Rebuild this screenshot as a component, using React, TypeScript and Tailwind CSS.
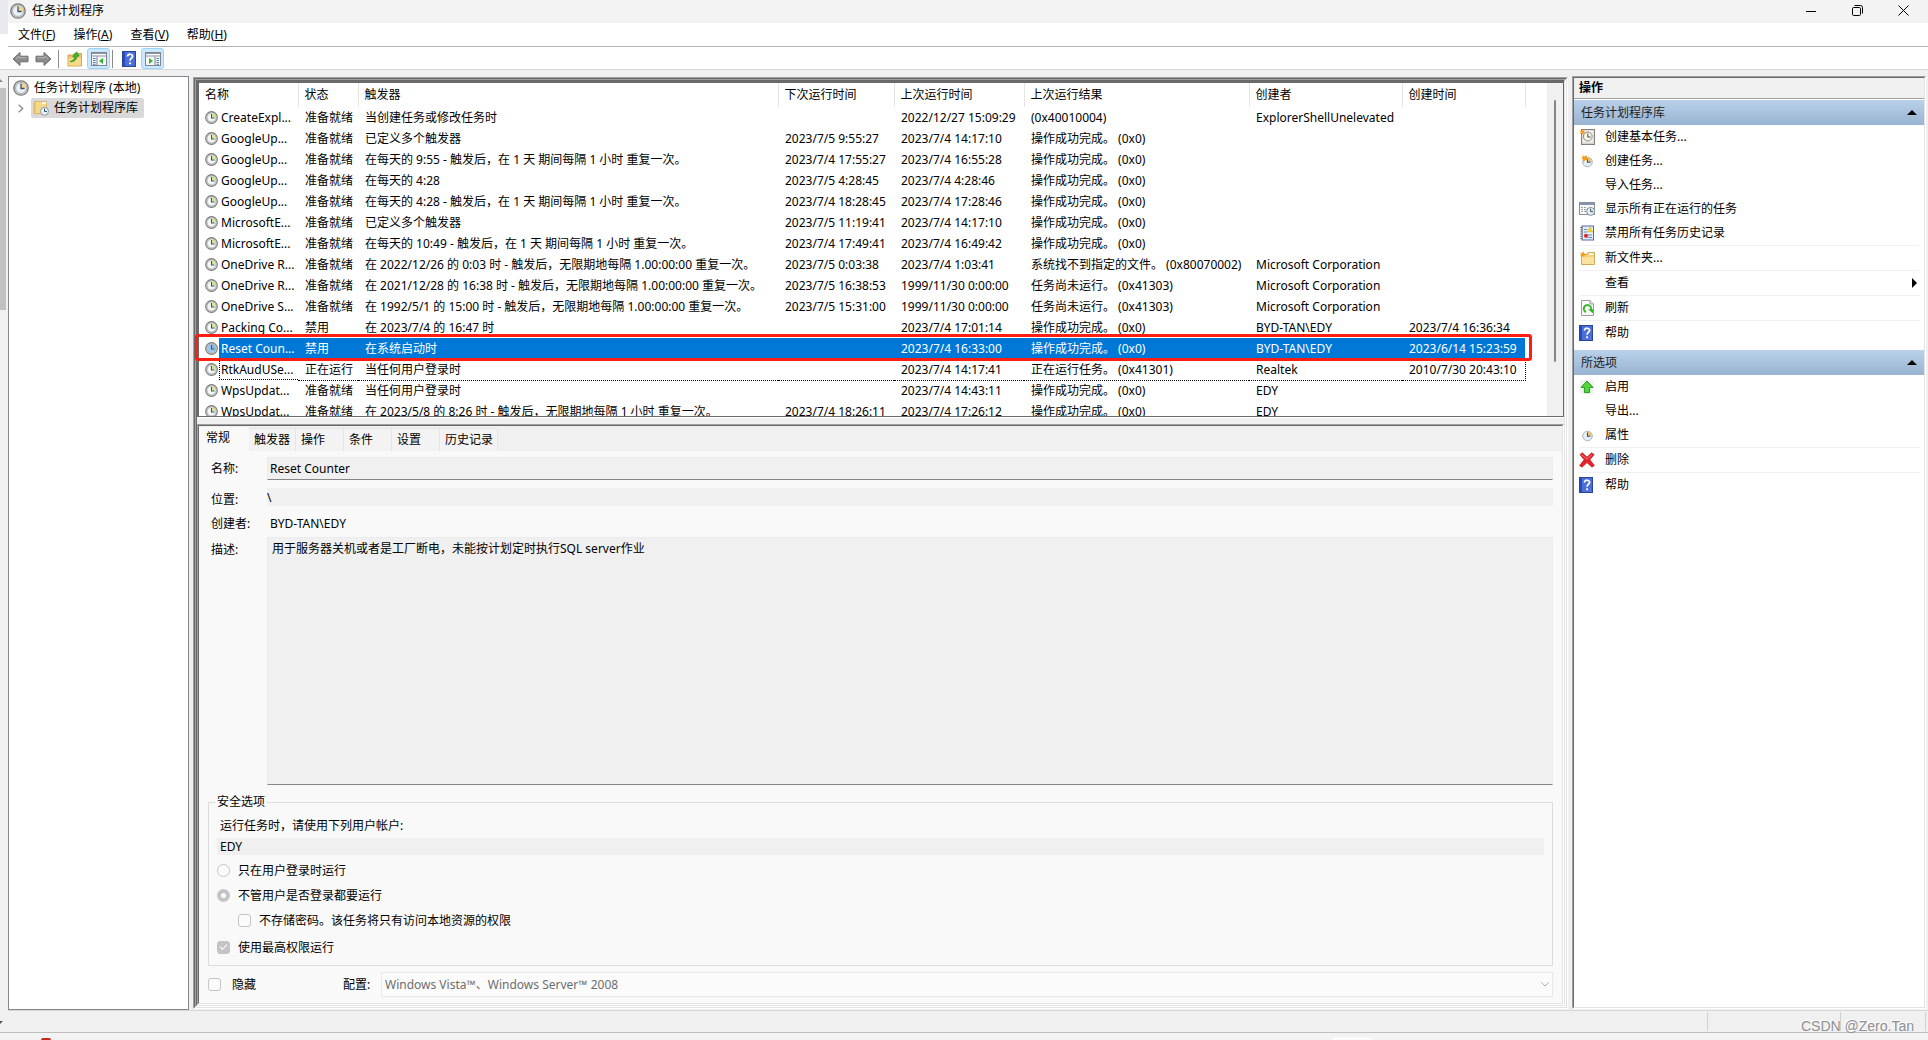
import { ReactNode } from 'react'
import { clsx } from 'clsx'

const menus = [
  { label: '文件', key: 'F' },
  { label: '操作', key: 'A' },
  { label: '查看', key: 'V' },
  { label: '帮助', key: 'H' },
]

const columns = [
  { label: '名称', width: 'w-[99px]' },
  { label: '状态', width: 'w-[60px]' },
  { label: '触发器', width: 'w-[420px]' },
  { label: '下次运行时间', width: 'w-[116px]' },
  { label: '上次运行时间', width: 'w-[130px]' },
  { label: '上次运行结果', width: 'w-[225px]' },
  { label: '创建者', width: 'w-[153px]' },
  { label: '创建时间', width: 'w-[123px]' },
]

const done = '操作成功完成。 (0x0)'

const tasks = [
  ['CreateExpl...', '准备就绪', '当创建任务或修改任务时', '', '2022/12/27 15:09:29', '(0x40010004)', 'ExplorerShellUnelevated', ''],
  ['GoogleUp...', '准备就绪', '已定义多个触发器', '2023/7/5 9:55:27', '2023/7/4 14:17:10', done, '', ''],
  ['GoogleUp...', '准备就绪', '在每天的 9:55 - 触发后，在 1 天 期间每隔 1 小时 重复一次。', '2023/7/4 17:55:27', '2023/7/4 16:55:28', done, '', ''],
  ['GoogleUp...', '准备就绪', '在每天的 4:28', '2023/7/5 4:28:45', '2023/7/4 4:28:46', done, '', ''],
  ['GoogleUp...', '准备就绪', '在每天的 4:28 - 触发后，在 1 天 期间每隔 1 小时 重复一次。', '2023/7/4 18:28:45', '2023/7/4 17:28:46', done, '', ''],
  ['MicrosoftE...', '准备就绪', '已定义多个触发器', '2023/7/5 11:19:41', '2023/7/4 14:17:10', done, '', ''],
  ['MicrosoftE...', '准备就绪', '在每天的 10:49 - 触发后，在 1 天 期间每隔 1 小时 重复一次。', '2023/7/4 17:49:41', '2023/7/4 16:49:42', done, '', ''],
  ['OneDrive R...', '准备就绪', '在 2022/12/26 的 0:03 时 - 触发后，无限期地每隔 1.00:00:00 重复一次。', '2023/7/5 0:03:38', '2023/7/4 1:03:41', '系统找不到指定的文件。 (0x80070002)', 'Microsoft Corporation', ''],
  ['OneDrive R...', '准备就绪', '在 2021/12/28 的 16:38 时 - 触发后，无限期地每隔 1.00:00:00 重复一次。', '2023/7/5 16:38:53', '1999/11/30 0:00:00', '任务尚未运行。 (0x41303)', 'Microsoft Corporation', ''],
  ['OneDrive S...', '准备就绪', '在 1992/5/1 的 15:00 时 - 触发后，无限期地每隔 1.00:00:00 重复一次。', '2023/7/5 15:31:00', '1999/11/30 0:00:00', '任务尚未运行。 (0x41303)', 'Microsoft Corporation', ''],
  ['Packing Co...', '禁用', '在 2023/7/4 的 16:47 时', '', '2023/7/4 17:01:14', done, 'BYD-TAN\\EDY', '2023/7/4 16:36:34'],
  ['Reset Coun...', '禁用', '在系统启动时', '', '2023/7/4 16:33:00', done, 'BYD-TAN\\EDY', '2023/6/14 15:23:59'],
  ['RtkAudUSe...', '正在运行', '当任何用户登录时', '', '2023/7/4 14:17:41', '正在运行任务。 (0x41301)', 'Realtek', '2010/7/30 20:43:10'],
  ['WpsUpdat...', '准备就绪', '当任何用户登录时', '', '2023/7/4 14:43:11', done, 'EDY', ''],
  ['WpsUpdat...', '准备就绪', '在 2023/5/8 的 8:26 时 - 触发后，无限期地每隔 1 小时 重复一次。', '2023/7/4 18:26:11', '2023/7/4 17:26:12', done, 'EDY', ''],
]

const selectedIndex = 11
const focusedIndex = 12

const tabs = [
  { label: '触发器', width: 'w-[47px]' },
  { label: '操作', width: 'w-12' },
  { label: '条件', width: 'w-12' },
  { label: '设置', width: 'w-12' },
  { label: '历史记录', width: 'w-[58px]' },
]

const ClockIcon = ({
  size = 16,
  face = '#e9f2fb',
  wedge = '#f6d48c',
}: {
  size?: number
  face?: string
  wedge?: string
}) => (
  <svg width={size} height={size} viewBox="0 0 16 16" className="shrink-0">
    <circle cx="8" cy="8" r="7.2" fill="#cfcfcf" stroke="#7b7b7b" strokeWidth="1.3" />
    <circle cx="8" cy="8" r="5.4" fill={face} stroke="#a8a8a8" strokeWidth="0.8" />
    <path d="M8 8V2.8A5.2 5.2 0 0 1 13.2 8Z" fill={wedge} />
    <path d="M8 3.6V8.5H11.6" fill="none" stroke="#3f5266" strokeWidth="1.3" />
  </svg>
)

const SmallClock = ({ star }: { star?: boolean }) => (
  <svg width="16" height="16" viewBox="0 0 16 16">
    <circle cx="8.5" cy="9" r="4.8" fill="#e3eef6" stroke="#a3b5c2" />
    <path d="M8.5 9V4.6A4.4 4.4 0 0 1 12.9 9Z" fill="#f5c56d" />
    <path d="M8.5 5.5V9.3H11.5" fill="none" stroke="#34506b" strokeWidth="1.1" />
    {star && (
      <path d="M3 2l2 1.6L8 2.4 7.6 5 9 7 6.2 7 4.6 9.2 4 6.6 2.6 5.4 3.6 4Z" fill="#f59b14" />
    )}
  </svg>
)

const ArrowIcon = ({ flip }: { flip?: boolean }) => (
  <svg width="17" height="16" viewBox="0 0 17 16" className={clsx(flip && '-scale-x-100')}>
    <path d="M1 8L8 1.5V5.2H16V10.8H8V14.5Z" fill="#8b8b8b" stroke="#6e6e6e" strokeLinejoin="round" />
    <path d="M4 8L7 5.2V6.8H14.5" fill="none" stroke="#b9b9b9" />
  </svg>
)

const FolderUpIcon = () => (
  <svg width="16" height="16" viewBox="0 0 16 16">
    <path d="M1 4H6L7.5 2.5H14.5V15H1Z" fill="#e9c46a" stroke="#c79b3a" strokeWidth="0.8" />
    <path d="M1.5 7H14V14.6H1.5Z" fill="#f6da8a" />
    <path d="M3 10.5C6 10 7.5 8 7.8 5.5L5.6 5.8 9.5 0.8 12.2 5 10.2 5C9.8 8.5 7 11.5 3 10.5Z" fill="#3cba2e" stroke="#1f8a1a" strokeWidth="0.6" />
  </svg>
)

const PaneIcon = ({ right }: { right?: boolean }) => (
  <svg width="16" height="14" viewBox="0 0 16 14">
    <rect x="0.5" y="0.5" width="15" height="13" fill="#f7f7f7" stroke="#7d8590" />
    <path d="M1 1.5H15M1 4H15" stroke="#8d97a5" strokeWidth="1.2" />
    {right ? (
      <>
        <path d="M10 4.5V13.5" stroke="#7d8590" />
        <path d="M4 6V12L8 9Z" fill="#35b52a" />
        <path d="M11.5 6.5H14M11.5 8.5H14M11.5 10.5H14M11.5 12.3H14" stroke="#4b7fc4" />
      </>
    ) : (
      <>
        <path d="M6 4.5V13.5" stroke="#7d8590" />
        <path d="M12 6V12L8 9Z" fill="#35b52a" />
        <path d="M2 6.5H4.6M2 8.5H4.6M2 10.5H4.6M2 12.3H4.6" stroke="#4b7fc4" />
      </>
    )}
  </svg>
)

const HelpIcon = () => (
  <svg width="14" height="16" viewBox="0 0 14 16" className="shrink-0">
    <rect x="0.5" y="0.5" width="13" height="15" fill="#4a6fd8" stroke="#2c459c" />
    <rect x="1" y="1" width="2" height="14" fill="#2b4cb8" />
    <path d="M5.5 5.4C5.5 2.4 10.8 2.6 10.6 5.4 10.5 7.2 8.1 7.4 8.1 9.8" fill="none" stroke="#fff" strokeWidth="1.7" />
    <circle cx="8.1" cy="12.3" r="1.1" fill="#fff" />
  </svg>
)

const LibraryIcon = () => (
  <svg width="16" height="16" viewBox="0 0 16 16" className="shrink-0">
    <path d="M0.5 2H5L6 3.2V14H0.5Z" fill="#e8c063" />
    <path d="M2 1.5H13.5V12.5L2 14Z" fill="#f5d888" stroke="#d6ab4d" strokeWidth="0.7" />
    <rect x="9" y="2.2" width="4" height="1.6" fill="#fff" />
    <circle cx="11.5" cy="11.3" r="4" fill="#e8f0f6" stroke="#8a9aa6" />
    <path d="M11.5 8.6V11.5H14" fill="none" stroke="#34506b" />
  </svg>
)

const BasicTaskIcon = () => (
  <svg width="16" height="16" viewBox="0 0 16 16">
    <rect x="2.5" y="0.5" width="13" height="15" fill="#d6d2cf" stroke="#8b7d78" />
    <rect x="3.5" y="1.5" width="11" height="12" fill="#f1efee" />
    <circle cx="8.8" cy="7.5" r="4.4" fill="#fbf4e0" stroke="#7f8c96" />
    <path d="M8.8 4.6V8H11.6" fill="none" stroke="#34506b" />
    <path d="M0.5 1.6L3 2.2 4 0 5 2.4 7 3 5 4 4.4 6.4 3 4.6 0.8 5 1.8 3.2Z" fill="#f7a11b" />
  </svg>
)

const RunningIcon = () => (
  <svg width="16" height="14" viewBox="0 0 16 14">
    <rect x="0.5" y="0.5" width="15" height="12" fill="#fafafa" stroke="#8a8f96" />
    <path d="M1 2H15" stroke="#8595ad" strokeWidth="2" />
    <path d="M2 5.5H8M2 7.5H7M2 9.5H7" stroke="#9a9fa6" strokeDasharray="2 1" />
    <circle cx="11.6" cy="9.4" r="4" fill="#e6eef2" stroke="#7e8e99" />
    <path d="M11.6 6.8V9.6H14" fill="none" stroke="#34506b" />
  </svg>
)

const HistoryIcon = () => (
  <svg width="16" height="16" viewBox="0 0 16 16">
    <rect x="3" y="1" width="11.5" height="14" fill="#e4edf8" stroke="#5268a8" />
    <path d="M1.2 2.5H4M1.2 4.7H4M1.2 6.9H4M1.2 9.1H4M1.2 11.3H4M1.2 13.5H4" stroke="#777" />
    <path d="M5 4.5H8M5 7H8M9 10H13M9 12.5H13" stroke="#6f87b8" />
    <path d="M11 2L13.6 6.8H8.4Z" fill="#f5d71c" stroke="#cfae12" strokeWidth="0.5" />
    <circle cx="7" cy="10.8" r="2.1" fill="#d92b2b" />
  </svg>
)

const NewFolderIcon = () => (
  <svg width="16" height="16" viewBox="0 0 16 16">
    <path d="M2.5 4.5H8L9 2.5H15.5V14.5H2.5Z" fill="#f4d27c" stroke="#c99c40" strokeWidth="0.8" />
    <path d="M3 7H15V14H3Z" fill="#fae3a0" />
    <rect x="10" y="3.3" width="4" height="1.5" fill="#fff" />
    <path d="M0.8 2.6L3.2 3.2 4.6 1.2 5.2 3.4 7.6 4 5.6 5.2 5.2 7.4 3.6 5.8 1 6.4 2.2 4.4Z" fill="#f79a12" />
  </svg>
)

const RefreshIcon = () => (
  <svg width="16" height="16" viewBox="0 0 16 16">
    <path d="M2.5 0.5H11L14.5 4V15.5H2.5Z" fill="#fbfbfb" stroke="#9b9b9b" />
    <path d="M11 0.5V4H14.5" fill="#e6e6e6" stroke="#9b9b9b" />
    <path d="M7 12.2A3.7 3.7 0 1 1 12 10" fill="none" stroke="#35b52a" strokeWidth="2" />
    <path d="M9 9.2H14V13.6Z" fill="#35b52a" />
  </svg>
)

const EnableIcon = () => (
  <svg width="16" height="16" viewBox="0 0 16 16">
    <rect x="1" y="1" width="14" height="14" fill="#f2f2f2" />
    <path d="M8 2L14 8.4H10.6V13.6H5.4V8.4H2Z" fill="#52d53b" stroke="#249b1a" strokeLinejoin="round" />
  </svg>
)

const DeleteIcon = () => (
  <svg width="16" height="16" viewBox="0 0 16 16">
    <path d="M1 2.6L3.4 0.8 8 5.2 12.6 0.8 15.2 2.6 10.8 7.8 15.4 13.4 13 15.2 8 10.6 3 15.2 0.6 13.4 5.2 7.8Z" fill="#e8222a" stroke="#b01218" strokeWidth="0.7" />
    <path d="M2.4 2.6L8 7 13.4 2.4" fill="none" stroke="#ff8a86" strokeWidth="0.8" />
  </svg>
)

type Action = { label: string; icon?: ReactNode; line?: boolean; more?: boolean }

const libraryActions: Action[] = [
  { label: '创建基本任务...', icon: <BasicTaskIcon /> },
  { label: '创建任务...', icon: <SmallClock star /> },
  { label: '导入任务...' },
  { label: '显示所有正在运行的任务', icon: <RunningIcon /> },
  { label: '禁用所有任务历史记录', icon: <HistoryIcon />, line: true },
  { label: '新文件夹...', icon: <NewFolderIcon />, line: true },
  { label: '查看', more: true, line: true },
  { label: '刷新', icon: <RefreshIcon />, line: true },
  { label: '帮助', icon: <HelpIcon /> },
]

const selectedActions: Action[] = [
  { label: '启用', icon: <EnableIcon /> },
  { label: '导出...' },
  { label: '属性', icon: <SmallClock />, line: true },
  { label: '删除', icon: <DeleteIcon />, line: true },
  { label: '帮助', icon: <HelpIcon /> },
]

const ActionGroup = ({ title, actions }: { title: string; actions: Action[] }) => (
  <section className="mb-[5px]">
    <button className="flex h-[25px] w-full items-center justify-between bg-linear-to-b from-[#b9d1ea] to-[#99b4d1] pr-[7px] pl-[7px] text-[#1e1e1e]">
      {title}
      <svg width="10" height="5" viewBox="0 0 10 5">
        <path d="M0 5L5 0L10 5Z" />
      </svg>
    </button>
    <ul className="pr-[5px] pl-[5px]">
      {actions.map((action) => (
        <li key={action.label} className={clsx(action.line && 'border-b border-[#f0f0f0]')}>
          <button className="flex h-6 w-full items-center text-left">
            <span className="flex w-[26px] shrink-0">{action.icon}</span>
            <span className="flex-1">{action.label}</span>
            {action.more && (
              <svg width="5" height="10" viewBox="0 0 5 10" className="mr-0.5">
                <path d="M0 0L5 5L0 10Z" />
              </svg>
            )}
          </button>
        </li>
      ))}
    </ul>
  </section>
)

// Classic sunken 3D edge, two pixels wide
const Sunken = ({ className, children }: { className?: string; children: ReactNode }) => (
  <div className="flex min-h-0 min-w-0 flex-1 flex-col border border-t-[#a0a0a0] border-r-white border-b-white border-l-[#a0a0a0]">
    <div
      className={clsx(
        'flex min-h-0 min-w-0 flex-1 flex-col border border-t-[#696969] border-r-[#e3e3e3] border-b-[#e3e3e3] border-l-[#696969]',
        className
      )}
    >
      {children}
    </div>
  </div>
)

const TaskTable = () => (
  <table className="w-[1326px] table-fixed border-collapse whitespace-nowrap">
    <thead>
      <tr className="h-6">
        {columns.map((column) => (
          <th
            key={column.label}
            className={clsx('border-r border-[#e5e5e5] p-0 pl-1.5 text-left font-normal', column.width)}
          >
            {column.label}
          </th>
        ))}
      </tr>
    </thead>
    <tbody>
      {tasks.map((task, row) => {
        const selected = row === selectedIndex
        const focused = row === focusedIndex
        return (
          <tr key={row} className="h-[21px]">
            {task.map((text, col) =>
              col === 0 ? (
                <td key={col} className="p-0">
                  <div className="flex h-[21px] items-center pl-1.5">
                    <ClockIcon
                      size={13}
                      face={selected ? '#9cc7ee' : '#f2f6f4'}
                      wedge={selected ? '#8fb9dc' : '#d5e59a'}
                    />
                    <span
                      className={clsx(
                        'ml-px flex h-full flex-1 items-center pl-0.5',
                        selected && 'bg-[#0078d7] text-white',
                        focused && 'border-b border-l border-dotted border-black pt-px pl-px'
                      )}
                    >
                      {text}
                    </span>
                  </div>
                </td>
              ) : (
                <td
                  key={col}
                  className={clsx(
                    'p-0 pl-[7px]',
                    selected && 'bg-[#0078d7] text-white',
                    focused && 'border-b border-dotted border-black pt-px',
                    focused && col === task.length - 1 && 'border-r'
                  )}
                >
                  {text}
                </td>
              )
            )}
          </tr>
        )
      })}
    </tbody>
  </table>
)

const checkClass =
  "flex size-[13px] shrink-0 appearance-none items-center justify-center rounded-[3px] border border-[#c4c4c4] bg-[#fbfbfb] checked:bg-[#c4c4c4] checked:before:mb-[3px] checked:before:h-[4px] checked:before:w-[7px] checked:before:-rotate-45 checked:before:border-b checked:before:border-l checked:before:border-white checked:before:content-['']"

const radioClass =
  'size-[13px] shrink-0 appearance-none rounded-full border border-[#c4c4c4] bg-[#fbfbfb] checked:border-4'

const GeneralTab = () => (
  <div className="flex min-h-0 flex-1 flex-col bg-[#f9f9f9] pt-1.5 pr-[9px] pb-1.5 pl-[9px]">
    <div className="flex min-h-0 flex-1 flex-col pl-[3px]">
      <div className="flex h-[23px] items-center">
        <label htmlFor="name" className="w-14">
          名称:
        </label>
        <input
          id="name"
          readOnly
          defaultValue="Reset Counter"
          className="h-full min-w-0 flex-1 border border-[#ececec] border-b-[#868686] bg-[#f0f0f0] pl-0.5 outline-none"
        />
      </div>
      <div className="mt-2 flex h-[18px] items-center">
        <label htmlFor="location" className="w-14 pt-1.5">
          位置:
        </label>
        <input
          id="location"
          readOnly
          defaultValue="\"
          className="h-full min-w-0 flex-1 bg-[#f0f0f0] outline-none"
        />
      </div>
      <div className="mt-2 flex h-5 items-center">
        <span className="w-14">创建者:</span>
        <span className="pl-[3px]">BYD-TAN\EDY</span>
      </div>
      <div className="mt-[3px] flex min-h-0 flex-1">
        <label htmlFor="description" className="w-14 pt-[5px]">
          描述:
        </label>
        <textarea
          id="description"
          readOnly
          defaultValue="用于服务器关机或者是工厂断电，未能按计划定时执行SQL server作业"
          className="min-w-0 flex-1 resize-none border border-[#ececec] border-b-[#868686] bg-[#f0f0f0] px-1 py-[3px] outline-none"
        />
      </div>
    </div>

    <fieldset className="mt-[9px] shrink-0 border border-[#dcdcdc] pr-2 pb-[5px] pl-2">
      <legend className="ml-[-2px] px-0.5">安全选项</legend>
      <label htmlFor="account" className="mt-2 ml-[3px] block leading-4">
        运行任务时，请使用下列用户帐户:
      </label>
      <input
        id="account"
        readOnly
        defaultValue="EDY"
        className="mt-1 block h-[17px] w-full bg-[#f0f0f0] pl-[3px] outline-none"
      />
      <div className="mt-[3px] flex flex-col">
        <label className="flex h-[25px] items-center gap-2">
          <input type="radio" name="logon" disabled className={radioClass} />
          只在用户登录时运行
        </label>
        <label className="flex h-[25px] items-center gap-2">
          <input type="radio" name="logon" disabled defaultChecked className={radioClass} />
          不管用户是否登录都要运行
        </label>
        <label className="ml-[21px] flex h-[25px] items-center gap-2">
          <input type="checkbox" disabled className={checkClass} />
          不存储密码。该任务将只有访问本地资源的权限
        </label>
        <label className="mt-[2px] flex h-[25px] items-center gap-2">
          <input type="checkbox" disabled defaultChecked className={checkClass} />
          使用最高权限运行
        </label>
      </div>
    </fieldset>

    <div className="mt-1.5 flex h-[25px] shrink-0 items-center">
      <label className="flex w-[135px] items-center gap-[11px]">
        <input type="checkbox" disabled className={checkClass} />
        隐藏
      </label>
      <label htmlFor="configure" className="w-[38px]">
        配置:
      </label>
      <div className="relative h-full flex-1">
        <select
          id="configure"
          disabled
          className="h-full w-full appearance-none border border-[#e8e8e8] bg-[#fbfbfb] pl-[3px] text-[#6d6d6d] opacity-100"
        >
          <option>Windows Vista™、Windows Server™ 2008</option>
        </select>
        <svg width="8" height="5" viewBox="0 0 8 5" className="absolute top-2.5 right-1">
          <path d="M0.5 0.5L4 4L7.5 0.5" fill="none" stroke="#a8a8a8" />
        </svg>
      </div>
    </div>
  </div>
)

const TitleBar = () => (
  <header className="flex h-[23px] shrink-0 items-center bg-[#f3f3f3] pb-0.5 pl-0.5">
    <ClockIcon />
    <h1 className="ml-1.5 flex-1">任务计划程序</h1>
    <button aria-label="最小化" className="flex h-full w-[46px] items-center justify-center">
      <svg width="10" height="10" viewBox="0 0 10 10">
        <path d="M0 5.5H10" stroke="#000" />
      </svg>
    </button>
    <button aria-label="还原" className="flex h-full w-[46px] items-center justify-center">
      <svg width="11" height="11" viewBox="0 0 11 11" fill="none" stroke="#000">
        <rect x="0.5" y="2.5" width="8" height="8" rx="1.2" />
        <path d="M2.5 0.5H8.5A2 2 0 0 1 10.5 2.5V8.5" />
      </svg>
    </button>
    <button aria-label="关闭" className="mr-0.5 flex h-full w-[46px] items-center justify-center">
      <svg width="11" height="11" viewBox="0 0 11 11">
        <path d="M0.5 0.5L10.5 10.5M10.5 0.5L0.5 10.5" stroke="#000" />
      </svg>
    </button>
  </header>
)

const toggled = 'flex h-[21px] w-[23px] items-center justify-center rounded-[3px] border border-[#99d1ff] bg-[#cce8ff]'

const ToolBar = () => (
  <div className="flex h-[23px] shrink-0 items-center border-b border-[#d9d9d9] bg-white pt-px pl-1">
    <button aria-label="后退">
      <ArrowIcon />
    </button>
    <button aria-label="前进" className="ml-1.5">
      <ArrowIcon flip />
    </button>
    <span className="ml-1.5 h-[18px] w-px bg-[#8c8c8c]" />
    <button aria-label="上一级" className="ml-2">
      <FolderUpIcon />
    </button>
    <button aria-label="显示/隐藏控制台树" className={clsx(toggled, 'ml-1')}>
      <PaneIcon />
    </button>
    <span className="ml-0.5 h-[18px] w-px bg-[#8c8c8c]" />
    <button aria-label="帮助" className="ml-[9px]">
      <HelpIcon />
    </button>
    <button aria-label="显示/隐藏操作窗格" className={clsx(toggled, 'ml-[5px]')}>
      <PaneIcon right />
    </button>
  </div>
)

const App = () => {
  return (
    <div className="relative flex h-screen flex-col overflow-hidden bg-[#f0f0f0] font-['Noto_Sans','Noto_Sans_CJK_SC',sans-serif] text-[12px] leading-4 text-black">
      <div className="flex min-h-0 flex-1">
        {/* edge of the window behind */}
        <div className="flex w-2 shrink-0 flex-col">
          <div className="h-[34px] bg-[#e9eaf0]" />
          <div className="h-9 border-b border-[#d9d9d9] bg-white" />
          <svg width="3" height="3" viewBox="0 0 3 3" className="mt-[9px] mb-1.5">
            <path d="M0 0L3 3H0Z" fill="#8a8a8a" />
          </svg>
          <div className="h-[222px] w-1.5 bg-[#c1c1c1]" />
          <svg width="3" height="3" viewBox="0 0 3 3" className="mt-auto mb-2">
            <path d="M0 0H3L0 3Z" fill="#505050" />
          </svg>
        </div>

        <div className="flex min-w-0 flex-1 flex-col">
          <TitleBar />
          <nav className="flex h-6 shrink-0 items-center gap-[18px] border-b border-[#b4b4b4] bg-white pl-2.5">
            {menus.map((menu) => (
              <button key={menu.key} className="text-left">
                {menu.label}(<u>{menu.key}</u>)
              </button>
            ))}
          </nav>
          <ToolBar />

          <main className="flex min-h-0 flex-1 pt-1.5">
            <aside className="w-[181px] shrink-0 border border-[#828790] bg-white pt-0.5 pl-1">
              <div className="mb-px flex h-[18px] items-center gap-[5px]">
                <ClockIcon />
                任务计划程序 (本地)
              </div>
              <div className="flex h-5 items-center">
                <svg width="6" height="9" viewBox="0 0 6 9" className="mr-[7px] ml-[5px]">
                  <path d="M0.7 0.7L4.7 4.5L0.7 8.3" fill="none" stroke="#8f8f8f" strokeWidth="1.4" />
                </svg>
                <button className="flex h-5 items-center gap-[5px] rounded-[2px] bg-[#d9d9d9] pr-1.5 pl-0.5">
                  <LibraryIcon />
                  任务计划程序库
                </button>
              </div>
            </aside>

            <div className="ml-1 flex min-w-0 flex-1 pt-px pb-px">
              <Sunken>
                <Sunken>
                  <div className="relative flex h-[336px] shrink-0">
                    <div className="flex min-w-0 flex-1 border-2 border-r-1 border-b-1 border-[#696969] bg-white">
                      <div className="min-w-0 flex-1 overflow-hidden">
                        <TaskTable />
                      </div>
                      <div className="flex w-4 shrink-0 justify-center bg-[#f0f0f0] pt-[17px]">
                        <div className="h-[262px] w-0.5 rounded-full bg-[#868686]" />
                      </div>
                    </div>
                    <div className="absolute top-[253px] -left-0.5 h-[27px] w-[1337px] rounded-[3px] border-3 border-[#ff1e12]" />
                  </div>
                  <div className="h-[7px] shrink-0 border-t border-white" />
                  <Sunken>
                    <div role="tablist" className="flex h-[25px] shrink-0 items-end bg-[#f0f0f0]">
                      <button role="tab" aria-selected="true" className="h-6 w-[50px] bg-[#f9f9f9] pr-3 pb-0.5">
                        常规
                      </button>
                      {tabs.map((tab) => (
                        <button
                          key={tab.label}
                          role="tab"
                          aria-selected="false"
                          className={clsx(
                            'h-[23px] border-t border-r border-[#e5e5e5] bg-[#f3f3f3] pl-[5px] text-left',
                            tab.width
                          )}
                        >
                          {tab.label}
                        </button>
                      ))}
                    </div>
                    <GeneralTab />
                  </Sunken>
                </Sunken>
              </Sunken>
            </div>

            <aside className="mr-0.5 ml-1 flex w-[354px] shrink-0 pb-px">
              <Sunken className="bg-white">
                <h2 className="h-[21px] border-b border-[#a0a0a0] bg-[#f0f0f0] pt-0.5 pl-[5px] font-bold">操作</h2>
                <div className="mt-px">
                  <ActionGroup title="任务计划程序库" actions={libraryActions} />
                  <ActionGroup title="所选项" actions={selectedActions} />
                </div>
              </Sunken>
            </aside>
          </main>

          <footer className="flex h-[22px] shrink-0 justify-end border-t border-[#d7d7d7] py-px">
            <div className="w-[133px] border-l border-[#d0d0d0]" />
            <div className="w-[86px] border-r border-l border-[#d0d0d0]" />
            <div className="w-0.5" />
          </footer>
        </div>
      </div>

      {/* strip under the window */}
      <div className="flex h-2 shrink-0 items-end overflow-hidden border-t border-[#bfbfbf] bg-[#f3f3f3]">
        <div className="ml-[41px] h-0.5 w-2.5 rounded-t-full bg-[#c42b1c]" />
        <div className="ml-[1281px] h-[3px] w-[39px] rounded-t-[3px] bg-[#fbfbfb]" />
      </div>

      <div className="absolute right-3.5 bottom-1 font-['Liberation_Sans',Arial,sans-serif] text-[14px] leading-5 text-[#8f8f8f] [text-shadow:-1px_-1px_0_#fff]">
        CSDN @Zero.Tan
      </div>
    </div>
  )
}

export default App
